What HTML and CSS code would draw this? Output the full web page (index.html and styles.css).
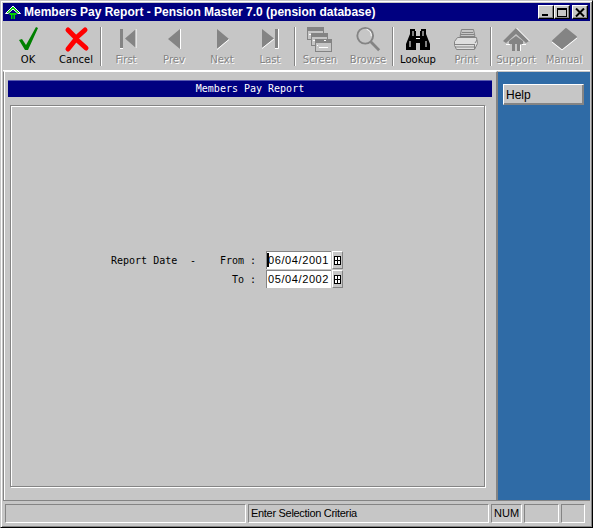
FILE: index.html
```html
<!DOCTYPE html>
<html lang="en">
  <head>
    <meta charset="UTF-8" />
    <title>Members Pay Report</title>
    <link rel="stylesheet" href="styles.css">
  </head>

  <body>
    <div class="window">
      <div class="titlebar">
        <svg class="app-icon" width="18" height="16" viewBox="0 0 18 16">
          <path d="M9 2 L1.5 9.5 L4 9.5 L9 5 L14 9.5 L16.5 9.5 Z" fill="#00d000" stroke="#fff" stroke-width="1" stroke-linejoin="round" />
          <path d="M5.5 9 H12.5 V11 H11 V15 H9.5 V11 H8.5 V15 H7 V11 H5.5 Z" fill="#00d000" />
        </svg>
        <span class="title-text">Members Pay Report - Pension Master 7.0 (pension database)</span>
        <div class="win-buttons">
          <div class="win-btn"><span class="min-glyph"></span></div>
          <div class="win-btn"><span class="max-glyph"></span></div>
          <div class="win-btn win-close">
            <svg width="10" height="9" viewBox="0 0 10 9"><path d="M1 0.5 L9 8.5 M9 0.5 L1 8.5" stroke="#000" stroke-width="2" /></svg>
          </div>
        </div>
      </div>

      <div class="toolbar">
        <div class="tool">
          <svg width="26" height="26" viewBox="0 0 26 26"><path d="M4 14 L7 13 L11 19 L21 1 L23 2 L13 24 L10 24 Z" fill="#008000" /></svg>
          <span>OK</span>
        </div>
        <div class="tool">
          <svg width="26" height="26" viewBox="0 0 26 26"><path d="M5 4 L13 12 L22 4 M5 23 L13 13 L23 22" fill="none" stroke="#ff0000" stroke-width="5" stroke-linecap="round" stroke-linejoin="round" /></svg>
          <span>Cancel</span>
        </div>
        <div class="sep"></div>
        <div class="tool off">
          <svg width="26" height="26" viewBox="0 0 26 26"><path d="M7 3 H10 V22 H7 Z M23 3 V22 L12 12.5 Z" fill="#848484" /><path d="M23 3 V22 M7 22.5 H10" stroke="#fff" fill="none" /></svg>
          <span>First</span>
        </div>
        <div class="tool off">
          <svg width="26" height="26" viewBox="0 0 26 26"><path d="M19 3 V23 L7 13 Z" fill="#848484" /><path d="M19.5 3 V23" stroke="#fff" /></svg>
          <span>Prev</span>
        </div>
        <div class="tool off">
          <svg width="26" height="26" viewBox="0 0 26 26"><path d="M8 3 V23 L20 13 Z" fill="#848484" /><path d="M8 23.5 L20 13.5" stroke="#fff" /></svg>
          <span>Next</span>
        </div>
        <div class="tool off">
          <svg width="26" height="26" viewBox="0 0 26 26"><path d="M5 3 V22 L17 12.5 Z M18 3 H21 V22 H18 Z" fill="#848484" /><path d="M5 22.5 L17 13 M18 22.5 H21.5 V3" stroke="#fff" fill="none" /></svg>
          <span>Last</span>
        </div>
        <div class="sep"></div>
        <div class="tool off">
          <svg width="28" height="26" viewBox="0 0 28 26">
            <g fill="#c6c6c6" stroke="#848484">
              <rect x="1.5" y="1.5" width="16" height="12" />
              <rect x="5.5" y="7.5" width="16" height="12" />
              <rect x="9.5" y="13.5" width="16" height="12" />
            </g>
            <path d="M2 2 H17 V5 H2 Z M6 8 H21 V11 H6 Z M10 14 H25 V17 H10 Z" fill="#848484" />
            <path d="M13 21.5 H22 M3 8.5 H5 M7 14.5 H9 M18 14.5 H20 M11 19.5 H12" stroke="#fff" />
          </svg>
          <span>Screen</span>
        </div>
        <div class="tool off">
          <svg width="28" height="28" viewBox="0 0 28 28">
            <circle cx="11" cy="10.5" r="8.5" fill="none" stroke="#848484" stroke-width="2" />
            <path d="M12.5 3.5 A7.5 7.5 0 0 1 17.5 11" fill="none" stroke="#fff" stroke-width="1" />
            <path d="M17 17 L26 26" stroke="#848484" stroke-width="3" />
          </svg>
          <span>Browse</span>
        </div>
        <div class="sep"></div>
        <div class="tool">
          <svg width="26" height="26" viewBox="0 0 26 26">
            <path d="M5 3 H10 V5 H11 V10 H15 V5 H16 V3 H21 V8 L25 18 V24 H15 V17 H11 V24 H1 V18 L5 8 Z" fill="#000" />
            <path d="M5 15 V21 M21 15 V21 M11 12.5 H15 M8 5 V10 M18 5 V10" stroke="#fff" />
          </svg>
          <span>Lookup</span>
        </div>
        <div class="tool off">
          <svg width="26" height="26" viewBox="0 0 26 26">
            <g transform="translate(0 3)">
              <path d="M8.5 0.5 H20.5 L22 7.5 H7 Z" fill="#c6c6c6" stroke="#848484" />
              <path d="M9 3.5 H20 M8 5.5 H21" stroke="#848484" />
              <path d="M4.5 8.5 H23.5 L24.5 14.5 L21.5 20.5 H3.5 L1.5 16.5 V12.5 Z" fill="#dedede" stroke="#848484" />
              <path d="M2 15.5 H21 M2 18 H21 M21.5 15 V20 M22 14 L24 11" stroke="#848484" />
            </g>
          </svg>
          <span>Print</span>
        </div>
        <div class="sep"></div>
        <div class="tool off">
          <svg width="28" height="26" viewBox="0 0 28 26">
            <path d="M14 2 L27 15 L24 17 L14 8 L4 17 L1 15 Z" fill="#848484" />
            <path d="M14 10 L21 15 V18 H18 V25 H15 V18 H13 V25 H10 V18 H7 V15 Z" fill="#848484" />
            <path d="M14.5 2 L27.5 15 M4 18.5 H8 M20 18.5 H24 M18.5 19 V25" stroke="#fff" fill="none" />
          </svg>
          <span>Support</span>
        </div>
        <div class="tool off">
          <svg width="28" height="26" viewBox="0 0 28 26">
            <path d="M16 3 L26 11 L12 22 L3 15 Z" fill="#848484" stroke="#848484" stroke-width="2" stroke-linejoin="round" />
            <path d="M2 16 L12 24 L27 12" fill="none" stroke="#fff" />
          </svg>
          <span>Manual</span>
        </div>
      </div>

      <div class="middle">
        <div class="report-panel">
          <div class="report-heading">Members Pay Report</div>
          <div class="report-frame">
            <div class="date-form">
              <span class="lbl-report">Report Date</span>
              <span class="lbl-dash">-</span>
              <span class="lbl-side">From :</span>
              <div class="date-field">
                <div class="date-value has-caret">06/04/2001</div>
                <div class="cal-btn"><span class="cal-glyph"></span></div>
              </div>
              <span></span>
              <span></span>
              <span class="lbl-side">To :</span>
              <div class="date-field">
                <div class="date-value">05/04/2002</div>
                <div class="cal-btn"><span class="cal-glyph"></span></div>
              </div>
            </div>
          </div>
        </div>
        <div class="side-panel">
          <div class="help-btn">Help</div>
        </div>
      </div>

      <div class="statusbar">
        <div class="cell cell-wide"></div>
        <div class="cell cell-wide">Enter Selection Criteria</div>
        <div class="cell cell-num">NUM</div>
        <div class="cell cell-a"></div>
        <div class="cell cell-b"></div>
      </div>
    </div>
  </body>
</html>
```

FILE: styles.css
```css
* {
  box-sizing: border-box;
}

html,
body {
  margin: 0;
  padding: 0;
  background-color: #c6c6c6;
}

body {
  width: 593px;
  height: 528px;
  overflow: hidden;
  font-family: "Liberation Sans", Arial, sans-serif;
  font-size: 11px;
}

.window {
  width: 593px;
  height: 528px;
  display: flex;
  flex-direction: column;
  background-color: #c6c6c6;
  border: 1px solid;
  border-color: #c6c6c6 #000 #000 #c6c6c6;
  box-shadow: inset 1px 1px 0 #fff, inset -1px -1px 0 #848484;
  padding: 2px;
}

.titlebar {
  height: 18px;
  margin: 0 0 2px;
  flex: none;
  display: flex;
  align-items: center;
  background-color: #000080;
  color: #fff;
  padding-left: 1px;
}

.app-icon {
  flex: none;
  margin-right: 2px;
}

.title-text {
  font-size: 12px;
  font-weight: bold;
  white-space: nowrap;
}

.win-buttons {
  margin-left: auto;
  margin-right: 2px;
  display: flex;
}

.win-btn {
  width: 16px;
  height: 14px;
  display: flex;
  align-items: center;
  justify-content: center;
  background-color: #c6c6c6;
  border: 1px solid;
  border-color: #fff #000 #000 #fff;
  box-shadow: inset -1px -1px 0 #848484;
}

.win-close {
  margin-left: 2px;
}

.min-glyph {
  width: 6px;
  height: 2px;
  background-color: #000;
  margin-top: 6px;
  margin-right: 3px;
}

.max-glyph {
  width: 10px;
  height: 9px;
  border: 1px solid #000;
  border-top-width: 2px;
}

.toolbar {
  height: 48px;
  flex: none;
  display: flex;
  padding-left: 1px;
  border-bottom: 1px solid #fff;
}

.tool {
  width: 48px;
  display: flex;
  flex-direction: column;
  align-items: center;
  padding-top: 3px;
  color: #000;
  font-family: "DejaVu Sans", "Liberation Sans", sans-serif;
  font-size: 10px;
  line-height: 14px;
}

.tool svg {
  height: 26px;
  margin-bottom: 1px;
  overflow: visible;
}

.tool.off {
  color: #848484;
  text-shadow: 1px 1px 0 #fff;
}

.sep {
  width: 2px;
  height: 39px;
  margin-top: 4px;
  flex: none;
  background-color: #848484;
  border-right: 1px solid #fff;
}

.middle {
  flex: 1;
  display: flex;
  min-height: 0;
  border-bottom: 1px solid #848484;
}

.report-panel {
  width: 495px;
  flex: none;
  display: flex;
  flex-direction: column;
  padding: 8px 4px 13px 4px;
  border-left: 1px solid #848484;
  border-right: 2px solid #848484;
  border-top: 1px solid #fff;
  box-shadow: inset 1px 0 0 #fff;
}

.report-heading {
  height: 17px;
  flex: none;
  background-color: #000080;
  color: #fff;
  text-align: center;
  font-family: "DejaVu Sans Mono", "Liberation Mono", monospace;
  font-size: 10px;
  line-height: 17px;
  box-shadow: inset 0 1px 0 #5a5ab0;
}

.report-frame {
  flex: 1;
  margin: 8px 7px 0 2px;
  border: 1px solid #848484;
  box-shadow: inset 1px 1px 0 #fff, 1px 1px 0 #fff;
  padding: 145px 0 0 100px;
}

.date-form {
  display: grid;
  grid-template-columns: 79px 29px 47px auto;
  grid-template-rows: 18px 18px;
  row-gap: 1px;
  align-items: center;
  justify-content: start;
  font-family: "DejaVu Sans Mono", "Liberation Mono", monospace;
  font-size: 10px;
  color: #000;
  white-space: nowrap;
}

.lbl-side {
  text-align: right;
  margin-right: 10px;
}

.date-field {
  display: flex;
  align-items: stretch;
  height: 18px;
  gap: 1px;
}

.date-value {
  width: 65px;
  background-color: #fff;
  border-top: 1px solid #848484;
  border-left: 1px solid #848484;
  font-family: "Liberation Sans", Arial, sans-serif;
  font-size: 11px;
  letter-spacing: 0.6px;
  line-height: 16px;
  padding-left: 1px;
  position: relative;
}

.has-caret::before {
  content: "";
  position: absolute;
  left: 0;
  top: 1px;
  width: 2px;
  height: 14px;
  background-color: #000;
}

.cal-btn {
  width: 11px;
  display: flex;
  align-items: center;
  justify-content: center;
  border: 1px solid;
  border-color: #fff #848484 #848484 #fff;
}

.cal-glyph {
  width: 7px;
  height: 9px;
  border: 1px solid #000;
  background:
    linear-gradient(#000, #000) center / 100% 1px no-repeat,
    linear-gradient(#000, #000) center / 1px 100% no-repeat,
    #fff;
}

.side-panel {
  flex: 1;
  background-color: #2f6ba6;
  padding: 12px 5px 0;
  border-top: 1px solid #c6c6c6;
}

.help-btn {
  width: 81px;
  height: 21px;
  background-color: #c6c6c6;
  border: 1px solid;
  border-color: #fff #848484 #848484 #fff;
  box-shadow: inset -1px -1px 0 #848484;
  font-size: 12px;
  line-height: 20px;
  padding-left: 2px;
}

.statusbar {
  height: 24px;
  flex: none;
  display: flex;
  gap: 2px;
  padding: 3px 0 2px 2px;
}

.cell {
  border: 1px solid;
  border-color: #848484 #fff #fff #848484;
  font-size: 11px;
  letter-spacing: -0.3px;
  line-height: 16px;
  padding-left: 2px;
  white-space: nowrap;
  overflow: hidden;
}

.cell-wide {
  width: 241px;
}

.cell-num {
  width: 31px;
  letter-spacing: 0;
}

.cell-a {
  width: 35px;
}

.cell-b {
  width: 24px;
}
```
